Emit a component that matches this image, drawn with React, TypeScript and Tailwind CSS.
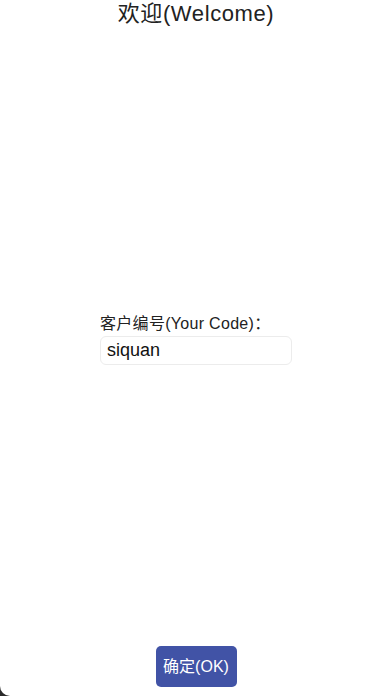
import { useState } from "react";

export default function App() {
  const [code, setCode] = useState("siquan");

  return (
    <div className="h-[696px] w-full bg-[#2a2a2a]">
      <div
        className="flex h-full w-full flex-col items-center overflow-hidden rounded-bl-[10px] bg-white text-[#222]"
        style={{ fontFamily: '"Liberation Sans", "Noto Sans CJK SC", sans-serif' }}
      >
        <h1 className="mt-[1px] text-[22px] leading-[26px] font-normal tracking-[0.6px]">欢迎(Welcome)</h1>

        <div className="mt-[286px] flex w-[192px] flex-col">
          <label className="text-[16px] leading-[22px] tracking-[0.3px]">客户编号(Your Code)：</label>
          <input
            value={code}
            onChange={(e) => setCode(e.target.value)}
            className="mt-[1px] h-[29px] w-full rounded-[6px] border border-[#ececec] px-[6px] text-[18px] font-medium text-[#111] outline-none"
          />
        </div>

        <div className="flex-1" />

        <button className="mb-[9px] h-[41px] w-[81px] rounded-[5px] bg-[#4153a6] text-[16px] text-white">
          确定(OK)
        </button>
      </div>
    </div>
  );
}
